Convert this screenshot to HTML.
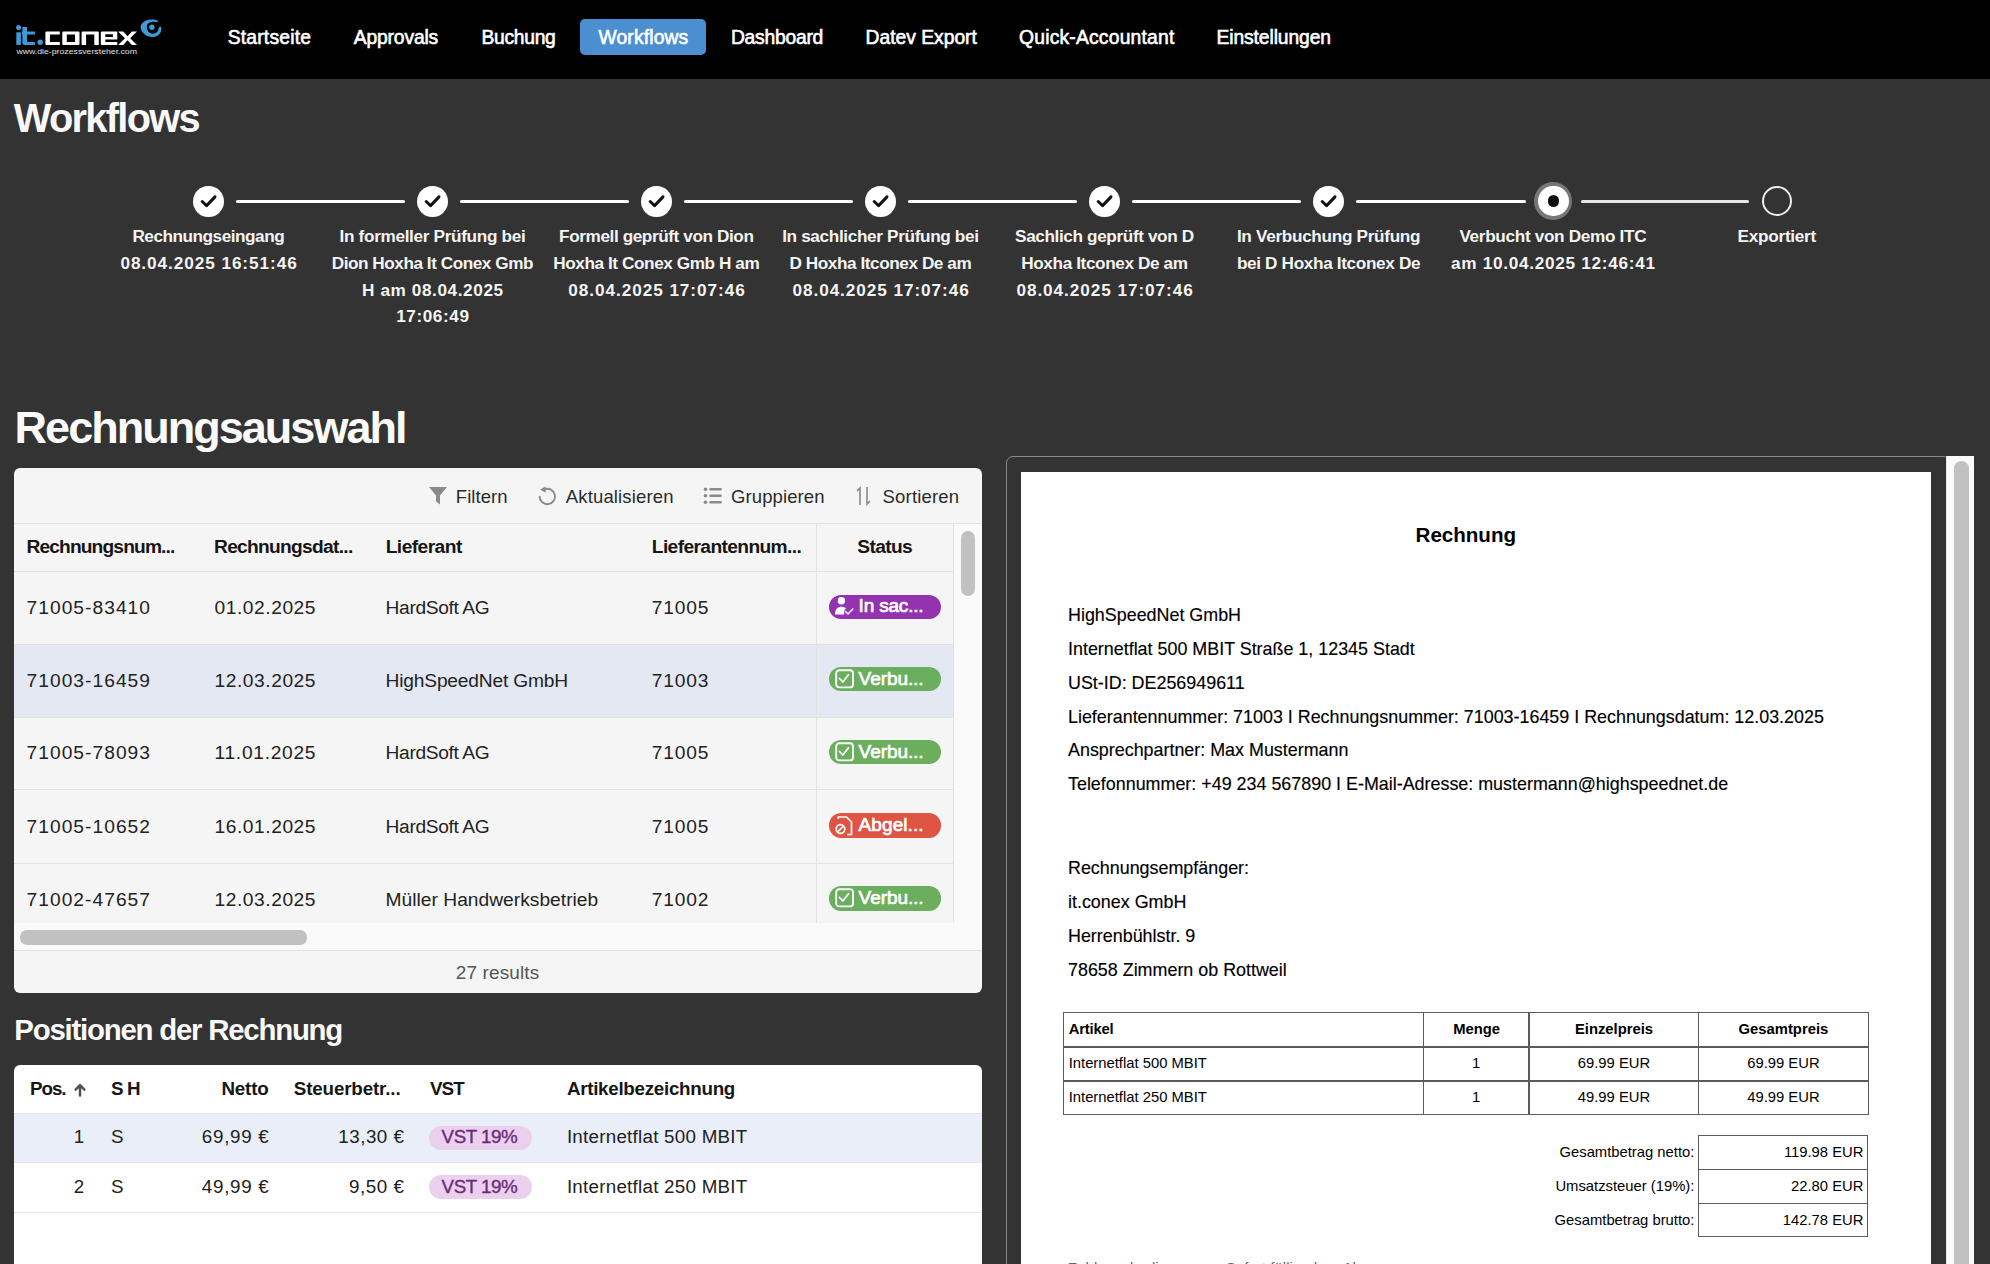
<!DOCTYPE html>
<html><head><meta charset="utf-8"><style>
html,body{margin:0;padding:0;width:1990px;height:1264px;overflow:hidden;background:#333;}
body{position:relative;font-family:"Liberation Sans",sans-serif;}
.t{position:absolute;white-space:pre;}
</style></head><body>
<div style="position:absolute;left:0;top:0;width:1990px;height:79px;background:#000"></div>
<div style="position:absolute;left:580px;top:19px;width:126px;height:36px;background:#4b8fd0;border-radius:5px"></div>
<svg width="170" height="60" style="position:absolute;left:0;top:0">
<g fill="#3f9ad8">
<circle cx="18.6" cy="27.4" r="2.5"/>
<rect x="16.3" y="32.3" width="4.6" height="12.6"/>
<path d="M22.4 27 H27 V31.6 H34.9 V34.6 H27 V41.9 H34.9 V44.9 H24.4 Q22.4 44.9 22.4 42.9 V34.6 H22 V31.6 H22.4 Z"/>
<circle cx="40.2" cy="42.3" r="2.7"/>
<path d="M157.8 20.6 C153 18.6 145 18.9 141.5 24 C139.3 27.5 141.5 32.8 146.5 35.6 C151.5 38.2 157.8 37.6 160.5 32.5 C161.5 30.5 161.5 28.5 160.8 26.6 C159.2 26.6 158.4 28.4 158.2 30 C157.4 33 153.2 34.6 150.1 33.1 C147.5 31.7 146.5 28.6 146.9 26 C147.5 22.6 151.4 21.4 154.5 21.7 C156 21.9 157.2 22.6 157.9 22.1 Z"/>
<circle cx="151.9" cy="27.3" r="2.7"/>
</g>
<g fill="#fff" fill-rule="evenodd">
<path d="M46.4 31.5 H59.8 V34.5 H49.9 V41.9 H59.8 V44.9 H46.4 Q45.4 44.9 45.4 43.9 V32.5 Q45.4 31.5 46.4 31.5 Z"/>
<path d="M63.3 31.5 H78.5 Q79.5 31.5 79.5 32.5 V43.9 Q79.5 44.9 78.5 44.9 H63.3 Q62.3 44.9 62.3 43.9 V32.5 Q62.3 31.5 63.3 31.5 Z M66.8 34.5 V41.9 H75 V34.5 Z"/>
<path d="M82.6 31.5 H97.8 Q98.8 31.5 98.8 32.5 V44.9 H94.3 V34.5 H86.1 V44.9 H81.6 V32.5 Q81.6 31.5 82.6 31.5 Z"/>
<path d="M101.8 31.5 H116.3 Q117.3 31.5 117.3 32.5 V39.6 H105.3 V41.9 H117.3 V44.9 H101.8 Q100.8 44.9 100.8 43.9 V32.5 Q100.8 31.5 101.8 31.5 Z M105.3 34.3 V37 H112.9 V34.3 Z"/>
<path d="M118.1 31.5 H123.3 L127.5 36.2 L131.8 31.5 H137 L130.2 38.2 L137 44.9 H131.8 L127.5 40.2 L123.3 44.9 H118.1 L124.9 38.2 Z"/>
</g>
<text x="16.4" y="54" fill="#e0e0e0" font-family="Liberation Sans" font-size="8" textLength="120.6" lengthAdjust="spacingAndGlyphs">www.die-prozessversteher.com</text>
</svg>
<div style="position:absolute;left:193.4px;top:185.79999999999998px;width:30.4px;height:30.8px;border-radius:50%;background:#fff"></div>
<svg style="position:absolute;left:198.6px;top:191.2px" width="20" height="20"><path d="M3.2 10.5 L7.6 14.6 L16 5.9" fill="none" stroke="#111" stroke-width="3" stroke-linecap="round" stroke-linejoin="round"/></svg>
<div style="position:absolute;left:236.1px;top:199.7px;width:168.9px;height:3px;background:#fff;border-radius:1.5px"></div>
<div style="position:absolute;left:417.3px;top:185.79999999999998px;width:30.4px;height:30.8px;border-radius:50%;background:#fff"></div>
<svg style="position:absolute;left:422.5px;top:191.2px" width="20" height="20"><path d="M3.2 10.5 L7.6 14.6 L16 5.9" fill="none" stroke="#111" stroke-width="3" stroke-linecap="round" stroke-linejoin="round"/></svg>
<div style="position:absolute;left:460.0px;top:199.7px;width:169.0px;height:3px;background:#fff;border-radius:1.5px"></div>
<div style="position:absolute;left:641.3px;top:185.79999999999998px;width:30.4px;height:30.8px;border-radius:50%;background:#fff"></div>
<svg style="position:absolute;left:646.5px;top:191.2px" width="20" height="20"><path d="M3.2 10.5 L7.6 14.6 L16 5.9" fill="none" stroke="#111" stroke-width="3" stroke-linecap="round" stroke-linejoin="round"/></svg>
<div style="position:absolute;left:684.0px;top:199.7px;width:169.0px;height:3px;background:#fff;border-radius:1.5px"></div>
<div style="position:absolute;left:865.3px;top:185.79999999999998px;width:30.4px;height:30.8px;border-radius:50%;background:#fff"></div>
<svg style="position:absolute;left:870.5px;top:191.2px" width="20" height="20"><path d="M3.2 10.5 L7.6 14.6 L16 5.9" fill="none" stroke="#111" stroke-width="3" stroke-linecap="round" stroke-linejoin="round"/></svg>
<div style="position:absolute;left:908.0px;top:199.7px;width:169.0px;height:3px;background:#fff;border-radius:1.5px"></div>
<div style="position:absolute;left:1089.3px;top:185.79999999999998px;width:30.4px;height:30.8px;border-radius:50%;background:#fff"></div>
<svg style="position:absolute;left:1094.5px;top:191.2px" width="20" height="20"><path d="M3.2 10.5 L7.6 14.6 L16 5.9" fill="none" stroke="#111" stroke-width="3" stroke-linecap="round" stroke-linejoin="round"/></svg>
<div style="position:absolute;left:1132.0px;top:199.7px;width:169.0px;height:3px;background:#fff;border-radius:1.5px"></div>
<div style="position:absolute;left:1313.3px;top:185.79999999999998px;width:30.4px;height:30.8px;border-radius:50%;background:#fff"></div>
<svg style="position:absolute;left:1318.5px;top:191.2px" width="20" height="20"><path d="M3.2 10.5 L7.6 14.6 L16 5.9" fill="none" stroke="#111" stroke-width="3" stroke-linecap="round" stroke-linejoin="round"/></svg>
<div style="position:absolute;left:1356.0px;top:199.7px;width:169.9000000000001px;height:3px;background:#fff;border-radius:1.5px"></div>
<div style="position:absolute;left:1534.4px;top:182.2px;width:38px;height:38px;border-radius:50%;background:#777"></div>
<div style="position:absolute;left:1538.1000000000001px;top:185.89999999999998px;width:30.6px;height:30.6px;border-radius:50%;background:#fff"></div>
<div style="position:absolute;left:1547.5px;top:195.29999999999998px;width:11.8px;height:11.8px;border-radius:50%;background:#0d0f12"></div>
<div style="position:absolute;left:1580.9px;top:199.7px;width:168.5999999999999px;height:3px;background:#e6e6e6;border-radius:1.5px"></div>
<div style="position:absolute;left:1761.7px;top:185.89999999999998px;width:30.6px;height:30.6px;border-radius:50%;box-sizing:border-box;border:2.5px solid #eee"></div>
<div style="position:absolute;left:13.5px;top:468px;width:968.5px;height:525px;background:#f5f5f5;border-radius:6px;overflow:hidden"></div>
<div style="position:absolute;left:13.5px;top:523px;width:968.5px;height:1px;background:#e2e2e2"></div>
<div style="position:absolute;left:13.5px;top:571px;width:940px;height:1px;background:#e0e0e0"></div>
<div style="position:absolute;left:13.5px;top:644.2px;width:940px;height:72.5px;background:#e3e8f3"></div>
<div style="position:absolute;left:13.5px;top:644.0px;width:940px;height:1px;background:#e2e2e2"></div>
<div style="position:absolute;left:13.5px;top:716.7px;width:940px;height:1px;background:#e2e2e2"></div>
<div style="position:absolute;left:13.5px;top:789.3px;width:940px;height:1px;background:#e2e2e2"></div>
<div style="position:absolute;left:13.5px;top:862.8px;width:940px;height:1px;background:#e2e2e2"></div>
<div style="position:absolute;left:816.3px;top:524px;width:1px;height:399px;background:#e2e2e2"></div>
<div style="position:absolute;left:953.3px;top:524px;width:1px;height:399px;background:#e2e2e2"></div>
<div style="position:absolute;left:954px;top:524px;width:28px;height:426px;background:#fafafa"></div>
<div style="position:absolute;left:13.5px;top:923px;width:968.5px;height:27px;background:#fafafa"></div>
<div style="position:absolute;left:13.5px;top:950px;width:968.5px;height:1px;background:#e0e0e0"></div>
<div style="position:absolute;left:960.5px;top:530.5px;width:14.3px;height:65.5px;background:#c1c1c1;border-radius:7px"></div>
<div style="position:absolute;left:20px;top:930px;width:286.5px;height:14.7px;background:#c1c1c1;border-radius:7px"></div>
<svg style="position:absolute;left:426px;top:484px" width="24" height="24"><path d="M3 3 H21 L14 11.5 V20.5 L10 17.5 V11.5 Z" fill="#8a8a8a"/></svg>
<svg style="position:absolute;left:535px;top:484px" width="24" height="24"><path d="M9.6 5.3 A7.7 7.7 0 1 1 4.6 12.6" fill="none" stroke="#8a8a8a" stroke-width="1.9" stroke-linecap="round"/><path d="M5.2 5.6 L10.6 2.6 L10.6 8.8 Z" fill="#8a8a8a"/></svg>
<svg style="position:absolute;left:701px;top:484px" width="24" height="24"><g fill="#8a8a8a"><circle cx="4.5" cy="5.3" r="1.8"/><circle cx="4.5" cy="11.8" r="1.8"/><circle cx="4.5" cy="18.3" r="1.8"/></g><g stroke="#8a8a8a" stroke-width="2.6" stroke-linecap="round"><path d="M9.6 5.3 H19.6"/><path d="M9.6 11.8 H19.6"/><path d="M9.6 18.3 H19.6"/></g></svg>
<svg style="position:absolute;left:854px;top:484px" width="20" height="24"><g fill="none" stroke="#8a8a8a" stroke-width="1.6"><path d="M6 21 V4 L3 7"/><path d="M13 3 V20 L16 17"/></g></svg>
<div style="position:absolute;left:828.6px;top:594.5px;width:112.3px;height:24.3px;border-radius:12.2px;background:#9333b0"></div>
<svg style="position:absolute;left:833px;top:593.5px" width="22" height="24"><circle cx="8.4" cy="6.8" r="3.7" fill="#fff"/><path d="M2 20.5 C2 15 5 12.8 8.5 12.8 C10.5 12.8 12 13.4 13 14.4 C11.5 15.5 10.8 17.5 11.2 20.5 Z" fill="#fff"/><path d="M12.5 17.5 L15 20 L19.8 15" fill="none" stroke="#fff" stroke-width="1.6" stroke-linecap="round" stroke-linejoin="round"/></svg>
<div style="position:absolute;left:828.6px;top:667.2px;width:112.3px;height:24.3px;border-radius:12.2px;background:#6aae5e"></div>
<svg style="position:absolute;left:833px;top:668.0px" width="22" height="22"><rect x="3.2" y="2.2" width="16.8" height="17.2" rx="3" fill="none" stroke="#fff" stroke-width="1.9"/><path d="M6.5 10.5 L9.8 14 L15.5 6.8" fill="none" stroke="#fff" stroke-width="1.8" stroke-linecap="round" stroke-linejoin="round"/></svg>
<div style="position:absolute;left:828.6px;top:739.8px;width:112.3px;height:24.3px;border-radius:12.2px;background:#6aae5e"></div>
<svg style="position:absolute;left:833px;top:740.5999999999999px" width="22" height="22"><rect x="3.2" y="2.2" width="16.8" height="17.2" rx="3" fill="none" stroke="#fff" stroke-width="1.9"/><path d="M6.5 10.5 L9.8 14 L15.5 6.8" fill="none" stroke="#fff" stroke-width="1.8" stroke-linecap="round" stroke-linejoin="round"/></svg>
<div style="position:absolute;left:828.6px;top:813.3px;width:112.3px;height:24.3px;border-radius:12.2px;background:#e05444"></div>
<svg style="position:absolute;left:833px;top:814.3px" width="24" height="24"><path d="M5.2 5 V3 H13.5 L18.5 8 V20.5 H14" fill="none" stroke="#fff" stroke-width="1.7" stroke-linejoin="round"/><circle cx="7.5" cy="15" r="4.3" fill="none" stroke="#fff" stroke-width="1.7"/><path d="M5 17.5 L10 12.5" stroke="#fff" stroke-width="1.7"/></svg>
<div style="position:absolute;left:828.6px;top:886.3px;width:112.3px;height:24.3px;border-radius:12.2px;background:#6aae5e"></div>
<svg style="position:absolute;left:833px;top:887.0999999999999px" width="22" height="22"><rect x="3.2" y="2.2" width="16.8" height="17.2" rx="3" fill="none" stroke="#fff" stroke-width="1.9"/><path d="M6.5 10.5 L9.8 14 L15.5 6.8" fill="none" stroke="#fff" stroke-width="1.8" stroke-linecap="round" stroke-linejoin="round"/></svg>
<div style="position:absolute;left:13.5px;top:1065.2px;width:968px;height:220px;background:#fff;border-radius:6px"></div>
<div style="position:absolute;left:13.5px;top:1113px;width:968px;height:49.5px;background:#e9eef8"></div>
<div style="position:absolute;left:13.5px;top:1112.5px;width:968px;height:1px;background:#e4e4e4"></div>
<div style="position:absolute;left:13.5px;top:1162px;width:968px;height:1px;background:#e8e8e8"></div>
<div style="position:absolute;left:13.5px;top:1211.5px;width:968px;height:1px;background:#e8e8e8"></div>
<svg style="position:absolute;left:73px;top:1082px" width="14" height="15"><path d="M7 13.6 V3.5 M2.6 7.6 L7 3.2 L11.4 7.6" fill="none" stroke="#505050" stroke-width="2.5" stroke-linecap="round" stroke-linejoin="round"/></svg>
<div style="position:absolute;left:429px;top:1125.8px;width:102.8px;height:24.3px;border-radius:12px;background:#ebd0ee"></div>
<div style="position:absolute;left:429px;top:1175px;width:102.8px;height:24.3px;border-radius:12px;background:#ebd0ee"></div>
<div style="position:absolute;left:1005.6px;top:456.1px;width:944.5px;height:900px;border:1px solid #8a8a8a;border-radius:7px;box-sizing:border-box"></div>
<div style="position:absolute;left:1020.9px;top:471.6px;width:909.8px;height:800px;background:#fff"></div>
<div style="position:absolute;left:1945.8px;top:455.8px;width:28px;height:820px;background:#fafafa;border-left:1px solid #e6e6e6;box-sizing:border-box"></div>
<div style="position:absolute;left:1954px;top:461.4px;width:15px;height:820px;background:#c1c1c1;border-radius:7.5px"></div>
<div style="position:absolute;left:1062.9px;top:1012px;width:806px;height:103px;border:1.5px solid #5c5c5c;box-sizing:border-box"></div>
<div style="position:absolute;left:1062.9px;top:1046.1px;width:806px;height:1.5px;background:#5c5c5c"></div>
<div style="position:absolute;left:1062.9px;top:1080px;width:806px;height:1.5px;background:#5c5c5c"></div>
<div style="position:absolute;left:1422.7px;top:1012px;width:1.5px;height:103px;background:#5c5c5c"></div>
<div style="position:absolute;left:1528.4px;top:1012px;width:1.5px;height:103px;background:#5c5c5c"></div>
<div style="position:absolute;left:1697.8px;top:1012px;width:1.5px;height:103px;background:#5c5c5c"></div>
<div style="position:absolute;left:1697.8px;top:1135px;width:170.6px;height:102px;border:1.5px solid #5c5c5c;box-sizing:border-box"></div>
<div style="position:absolute;left:1697.8px;top:1168.5px;width:170.6px;height:1.5px;background:#5c5c5c"></div>
<div style="position:absolute;left:1697.8px;top:1202.5px;width:170.6px;height:1.5px;background:#5c5c5c"></div>
<div class="t" style="left:227.70px;top:28.46px;font-size:19.3px;line-height:19.3px;color:#fff;letter-spacing:0.206px;-webkit-text-stroke:0.6px #fff;">Startseite</div>
<div class="t" style="left:353.80px;top:28.46px;font-size:19.3px;line-height:19.3px;color:#fff;letter-spacing:-0.167px;-webkit-text-stroke:0.6px #fff;">Approvals</div>
<div class="t" style="left:481.40px;top:28.46px;font-size:19.3px;line-height:19.3px;color:#fff;letter-spacing:-0.286px;-webkit-text-stroke:0.6px #fff;">Buchung</div>
<div class="t" style="left:598.50px;top:28.46px;font-size:19.3px;line-height:19.3px;color:#fff;letter-spacing:0.142px;-webkit-text-stroke:0.6px #fff;">Workflows</div>
<div class="t" style="left:730.90px;top:28.46px;font-size:19.3px;line-height:19.3px;color:#fff;letter-spacing:-0.241px;-webkit-text-stroke:0.6px #fff;">Dashboard</div>
<div class="t" style="left:865.50px;top:28.46px;font-size:19.3px;line-height:19.3px;color:#fff;letter-spacing:-0.005px;-webkit-text-stroke:0.6px #fff;">Datev Export</div>
<div class="t" style="left:1019.00px;top:28.46px;font-size:19.3px;line-height:19.3px;color:#fff;letter-spacing:0.208px;-webkit-text-stroke:0.6px #fff;">Quick-Accountant</div>
<div class="t" style="left:1216.50px;top:28.46px;font-size:19.3px;line-height:19.3px;color:#fff;letter-spacing:-0.106px;-webkit-text-stroke:0.6px #fff;">Einstellungen</div>
<div class="t" style="left:13.80px;top:98.60px;font-size:39.8px;line-height:39.8px;color:#f8f8f8;font-weight:700;letter-spacing:-1.698px;">Workflows</div>
<div class="t" style="left:132.40px;top:228.44px;font-size:17.2px;line-height:17.2px;color:#f4f4f4;font-weight:700;letter-spacing:-0.478px;">Rechnungseingang</div>
<div class="t" style="left:120.40px;top:255.44px;font-size:17.2px;line-height:17.2px;color:#f4f4f4;font-weight:700;letter-spacing:0.928px;">08.04.2025 16:51:46</div>
<div class="t" style="left:339.55px;top:228.44px;font-size:17.2px;line-height:17.2px;color:#f4f4f4;font-weight:700;letter-spacing:-0.337px;">In formeller Prüfung bei</div>
<div class="t" style="left:331.75px;top:255.44px;font-size:17.2px;line-height:17.2px;color:#f4f4f4;font-weight:700;letter-spacing:-0.468px;">Dion Hoxha It Conex Gmb</div>
<div class="t" style="left:362.10px;top:281.84px;font-size:17.2px;line-height:17.2px;color:#f4f4f4;font-weight:700;letter-spacing:0.584px;">H am 08.04.2025</div>
<div class="t" style="left:396.20px;top:308.24px;font-size:17.2px;line-height:17.2px;color:#f4f4f4;font-weight:700;letter-spacing:0.571px;">17:06:49</div>
<div class="t" style="left:559.10px;top:228.44px;font-size:17.2px;line-height:17.2px;color:#f4f4f4;font-weight:700;letter-spacing:-0.415px;">Formell geprüft von Dion</div>
<div class="t" style="left:553.30px;top:255.44px;font-size:17.2px;line-height:17.2px;color:#f4f4f4;font-weight:700;letter-spacing:-0.429px;">Hoxha It Conex Gmb H am</div>
<div class="t" style="left:568.25px;top:281.84px;font-size:17.2px;line-height:17.2px;color:#f4f4f4;font-weight:700;letter-spacing:0.939px;">08.04.2025 17:07:46</div>
<div class="t" style="left:782.20px;top:228.44px;font-size:17.2px;line-height:17.2px;color:#f4f4f4;font-weight:700;letter-spacing:-0.356px;">In sachlicher Prüfung bei</div>
<div class="t" style="left:789.50px;top:255.44px;font-size:17.2px;line-height:17.2px;color:#f4f4f4;font-weight:700;letter-spacing:-0.441px;">D Hoxha Itconex De am</div>
<div class="t" style="left:792.50px;top:281.84px;font-size:17.2px;line-height:17.2px;color:#f4f4f4;font-weight:700;letter-spacing:0.922px;">08.04.2025 17:07:46</div>
<div class="t" style="left:1015.05px;top:228.44px;font-size:17.2px;line-height:17.2px;color:#f4f4f4;font-weight:700;letter-spacing:-0.384px;">Sachlich geprüft von D</div>
<div class="t" style="left:1021.25px;top:255.44px;font-size:17.2px;line-height:17.2px;color:#f4f4f4;font-weight:700;letter-spacing:-0.397px;">Hoxha Itconex De am</div>
<div class="t" style="left:1016.45px;top:281.84px;font-size:17.2px;line-height:17.2px;color:#f4f4f4;font-weight:700;letter-spacing:0.928px;">08.04.2025 17:07:46</div>
<div class="t" style="left:1236.90px;top:228.44px;font-size:17.2px;line-height:17.2px;color:#f4f4f4;font-weight:700;letter-spacing:-0.321px;">In Verbuchung Prüfung</div>
<div class="t" style="left:1236.90px;top:255.44px;font-size:17.2px;line-height:17.2px;color:#f4f4f4;font-weight:700;letter-spacing:-0.353px;">bei D Hoxha Itconex De</div>
<div class="t" style="left:1459.45px;top:228.44px;font-size:17.2px;line-height:17.2px;color:#f4f4f4;font-weight:700;letter-spacing:-0.338px;">Verbucht von Demo ITC</div>
<div class="t" style="left:1451.00px;top:255.44px;font-size:17.2px;line-height:17.2px;color:#f4f4f4;font-weight:700;letter-spacing:0.704px;">am 10.04.2025 12:46:41</div>
<div class="t" style="left:1737.55px;top:228.44px;font-size:17.2px;line-height:17.2px;color:#f4f4f4;font-weight:700;letter-spacing:-0.275px;">Exportiert</div>
<div class="t" style="left:14.60px;top:404.69px;font-size:45px;line-height:45px;color:#fafafa;font-weight:700;letter-spacing:-1.979px;">Rechnungsauswahl</div>
<div class="t" style="left:455.80px;top:487.53px;font-size:18.5px;line-height:18.5px;color:#2a2a2a;letter-spacing:0.067px;">Filtern</div>
<div class="t" style="left:565.80px;top:487.53px;font-size:18.5px;line-height:18.5px;color:#2a2a2a;letter-spacing:0.149px;">Aktualisieren</div>
<div class="t" style="left:731.00px;top:487.53px;font-size:18.5px;line-height:18.5px;color:#2a2a2a;letter-spacing:0.105px;">Gruppieren</div>
<div class="t" style="left:882.60px;top:487.53px;font-size:18.5px;line-height:18.5px;color:#2a2a2a;letter-spacing:0.167px;">Sortieren</div>
<div class="t" style="left:26.40px;top:536.84px;font-size:19.2px;line-height:19.2px;color:#161616;font-weight:700;letter-spacing:-0.855px;">Rechnungsnum...</div>
<div class="t" style="left:214.00px;top:536.84px;font-size:19.2px;line-height:19.2px;color:#161616;font-weight:700;letter-spacing:-0.710px;">Rechnungsdat...</div>
<div class="t" style="left:385.70px;top:536.84px;font-size:19.2px;line-height:19.2px;color:#161616;font-weight:700;letter-spacing:-0.554px;">Lieferant</div>
<div class="t" style="left:651.80px;top:536.84px;font-size:19.2px;line-height:19.2px;color:#161616;font-weight:700;letter-spacing:-0.620px;">Lieferantennum...</div>
<div class="t" style="left:857.30px;top:536.84px;font-size:19.2px;line-height:19.2px;color:#161616;font-weight:700;letter-spacing:-0.648px;">Status</div>
<div class="t" style="left:26.50px;top:598.04px;font-size:19.2px;line-height:19.2px;color:#222;letter-spacing:1.040px;">71005-83410</div>
<div class="t" style="left:214.50px;top:598.04px;font-size:19.2px;line-height:19.2px;color:#222;letter-spacing:0.552px;">01.02.2025</div>
<div class="t" style="left:385.60px;top:598.04px;font-size:19.2px;line-height:19.2px;color:#222;letter-spacing:-0.357px;">HardSoft AG</div>
<div class="t" style="left:651.80px;top:598.04px;font-size:19.2px;line-height:19.2px;color:#222;letter-spacing:0.786px;">71005</div>
<div class="t" style="left:858.60px;top:596.41px;font-size:19px;line-height:19px;color:#fff;letter-spacing:-0.191px;-webkit-text-stroke:0.7px #fff;">In sac...</div>
<div class="t" style="left:26.50px;top:670.74px;font-size:19.2px;line-height:19.2px;color:#222;letter-spacing:1.040px;">71003-16459</div>
<div class="t" style="left:214.50px;top:670.74px;font-size:19.2px;line-height:19.2px;color:#222;letter-spacing:0.552px;">12.03.2025</div>
<div class="t" style="left:385.60px;top:670.74px;font-size:19.2px;line-height:19.2px;color:#222;letter-spacing:-0.192px;">HighSpeedNet GmbH</div>
<div class="t" style="left:651.80px;top:670.74px;font-size:19.2px;line-height:19.2px;color:#222;letter-spacing:0.786px;">71003</div>
<div class="t" style="left:858.60px;top:669.11px;font-size:19px;line-height:19px;color:#fff;letter-spacing:-0.070px;-webkit-text-stroke:0.7px #fff;">Verbu...</div>
<div class="t" style="left:26.50px;top:743.34px;font-size:19.2px;line-height:19.2px;color:#222;letter-spacing:1.040px;">71005-78093</div>
<div class="t" style="left:214.50px;top:743.34px;font-size:19.2px;line-height:19.2px;color:#222;letter-spacing:0.710px;">11.01.2025</div>
<div class="t" style="left:385.60px;top:743.34px;font-size:19.2px;line-height:19.2px;color:#222;letter-spacing:-0.357px;">HardSoft AG</div>
<div class="t" style="left:651.80px;top:743.34px;font-size:19.2px;line-height:19.2px;color:#222;letter-spacing:0.786px;">71005</div>
<div class="t" style="left:858.60px;top:741.71px;font-size:19px;line-height:19px;color:#fff;letter-spacing:-0.070px;-webkit-text-stroke:0.7px #fff;">Verbu...</div>
<div class="t" style="left:26.50px;top:816.84px;font-size:19.2px;line-height:19.2px;color:#222;letter-spacing:1.040px;">71005-10652</div>
<div class="t" style="left:214.50px;top:816.84px;font-size:19.2px;line-height:19.2px;color:#222;letter-spacing:0.552px;">16.01.2025</div>
<div class="t" style="left:385.60px;top:816.84px;font-size:19.2px;line-height:19.2px;color:#222;letter-spacing:-0.357px;">HardSoft AG</div>
<div class="t" style="left:651.80px;top:816.84px;font-size:19.2px;line-height:19.2px;color:#222;letter-spacing:0.786px;">71005</div>
<div class="t" style="left:858.60px;top:815.21px;font-size:19px;line-height:19px;color:#fff;letter-spacing:0.081px;-webkit-text-stroke:0.7px #fff;">Abgel...</div>
<div class="t" style="left:26.50px;top:889.84px;font-size:19.2px;line-height:19.2px;color:#222;letter-spacing:1.040px;">71002-47657</div>
<div class="t" style="left:214.50px;top:889.84px;font-size:19.2px;line-height:19.2px;color:#222;letter-spacing:0.552px;">12.03.2025</div>
<div class="t" style="left:385.60px;top:889.84px;font-size:19.2px;line-height:19.2px;color:#222;letter-spacing:0.018px;">Müller Handwerksbetrieb</div>
<div class="t" style="left:651.80px;top:889.84px;font-size:19.2px;line-height:19.2px;color:#222;letter-spacing:0.786px;">71002</div>
<div class="t" style="left:858.60px;top:888.21px;font-size:19px;line-height:19px;color:#fff;letter-spacing:-0.070px;-webkit-text-stroke:0.7px #fff;">Verbu...</div>
<div class="t" style="left:455.80px;top:963.01px;font-size:19px;line-height:19px;color:#555;letter-spacing:0.114px;">27 results</div>
<div class="t" style="left:14.30px;top:1014.90px;font-size:29.4px;line-height:29.4px;color:#fafafa;font-weight:700;letter-spacing:-1.226px;">Positionen der Rechnung</div>
<div class="t" style="left:30.10px;top:1079.98px;font-size:18.8px;line-height:18.8px;color:#161616;font-weight:700;letter-spacing:-1.088px;">Pos.</div>
<div class="t" style="left:110.90px;top:1079.98px;font-size:18.8px;line-height:18.8px;color:#161616;font-weight:700;">S</div>
<div class="t" style="left:127.10px;top:1079.98px;font-size:18.8px;line-height:18.8px;color:#161616;font-weight:700;">H</div>
<div class="t" style="left:221.40px;top:1079.98px;font-size:18.8px;line-height:18.8px;color:#161616;font-weight:700;letter-spacing:-0.147px;">Netto</div>
<div class="t" style="left:293.80px;top:1079.98px;font-size:18.8px;line-height:18.8px;color:#161616;font-weight:700;letter-spacing:-0.146px;">Steuerbetr...</div>
<div class="t" style="left:430.00px;top:1079.98px;font-size:18.8px;line-height:18.8px;color:#161616;font-weight:700;letter-spacing:-0.913px;">VST</div>
<div class="t" style="left:566.90px;top:1079.98px;font-size:18.8px;line-height:18.8px;color:#161616;font-weight:700;letter-spacing:-0.284px;">Artikelbezeichnung</div>
<div class="t" style="left:73.65px;top:1127.68px;font-size:18.8px;line-height:18.8px;color:#222;">1</div>
<div class="t" style="left:110.90px;top:1127.68px;font-size:18.8px;line-height:18.8px;color:#222;">S</div>
<div class="t" style="left:201.80px;top:1127.68px;font-size:18.8px;line-height:18.8px;color:#222;letter-spacing:0.723px;">69,99 €</div>
<div class="t" style="left:338.30px;top:1127.68px;font-size:18.8px;line-height:18.8px;color:#222;letter-spacing:0.490px;">13,30 €</div>
<div class="t" style="left:441.60px;top:1127.68px;font-size:18.8px;line-height:18.8px;color:#6a2a78;letter-spacing:-0.489px;-webkit-text-stroke:0.35px #6a2a78;">VST 19%</div>
<div class="t" style="left:566.90px;top:1127.68px;font-size:18.8px;line-height:18.8px;color:#222;letter-spacing:0.251px;">Internetflat 500 MBIT</div>
<div class="t" style="left:73.65px;top:1177.58px;font-size:18.8px;line-height:18.8px;color:#222;">2</div>
<div class="t" style="left:110.90px;top:1177.58px;font-size:18.8px;line-height:18.8px;color:#222;">S</div>
<div class="t" style="left:201.80px;top:1177.58px;font-size:18.8px;line-height:18.8px;color:#222;letter-spacing:0.723px;">49,99 €</div>
<div class="t" style="left:349.10px;top:1177.58px;font-size:18.8px;line-height:18.8px;color:#222;letter-spacing:0.517px;">9,50 €</div>
<div class="t" style="left:441.60px;top:1177.58px;font-size:18.8px;line-height:18.8px;color:#6a2a78;letter-spacing:-0.489px;-webkit-text-stroke:0.35px #6a2a78;">VST 19%</div>
<div class="t" style="left:566.90px;top:1177.58px;font-size:18.8px;line-height:18.8px;color:#222;letter-spacing:0.251px;">Internetflat 250 MBIT</div>
<div class="t" style="left:1415.60px;top:525.26px;font-size:20.6px;line-height:20.6px;color:#000;font-weight:700;letter-spacing:-0.039px;">Rechnung</div>
<div class="t" style="left:1068.00px;top:607.04px;font-size:17.9px;line-height:17.9px;color:#000;-webkit-text-stroke:0.15px #000;">HighSpeedNet GmbH</div>
<div class="t" style="left:1068.00px;top:640.89px;font-size:17.9px;line-height:17.9px;color:#000;-webkit-text-stroke:0.15px #000;">Internetflat 500 MBIT Straße 1, 12345 Stadt</div>
<div class="t" style="left:1068.00px;top:674.74px;font-size:17.9px;line-height:17.9px;color:#000;-webkit-text-stroke:0.15px #000;">USt-ID: DE256949611</div>
<div class="t" style="left:1068.00px;top:708.59px;font-size:17.9px;line-height:17.9px;color:#000;-webkit-text-stroke:0.15px #000;">Lieferantennummer: 71003 I Rechnungsnummer: 71003-16459 I Rechnungsdatum: 12.03.2025</div>
<div class="t" style="left:1068.00px;top:742.44px;font-size:17.9px;line-height:17.9px;color:#000;-webkit-text-stroke:0.15px #000;">Ansprechpartner: Max Mustermann</div>
<div class="t" style="left:1068.00px;top:776.29px;font-size:17.9px;line-height:17.9px;color:#000;-webkit-text-stroke:0.15px #000;">Telefonnummer: +49 234 567890 I E-Mail-Adresse: mustermann@highspeednet.de</div>
<div class="t" style="left:1068.00px;top:860.24px;font-size:17.9px;line-height:17.9px;color:#000;-webkit-text-stroke:0.15px #000;">Rechnungsempfänger:</div>
<div class="t" style="left:1068.00px;top:894.09px;font-size:17.9px;line-height:17.9px;color:#000;-webkit-text-stroke:0.15px #000;">it.conex GmbH</div>
<div class="t" style="left:1068.00px;top:927.94px;font-size:17.9px;line-height:17.9px;color:#000;-webkit-text-stroke:0.15px #000;">Herrenbühlstr. 9</div>
<div class="t" style="left:1068.00px;top:961.79px;font-size:17.9px;line-height:17.9px;color:#000;-webkit-text-stroke:0.15px #000;">78658 Zimmern ob Rottweil</div>
<div class="t" style="left:1068.70px;top:1021.97px;font-size:14.8px;line-height:14.8px;color:#000;font-weight:700;letter-spacing:-0.175px;">Artikel</div>
<div class="t" style="left:1453.17px;top:1021.97px;font-size:14.8px;line-height:14.8px;color:#000;font-weight:700;">Menge</div>
<div class="t" style="left:1574.94px;top:1021.97px;font-size:14.8px;line-height:14.8px;color:#000;font-weight:700;">Einzelpreis</div>
<div class="t" style="left:1738.58px;top:1021.97px;font-size:14.8px;line-height:14.8px;color:#000;font-weight:700;">Gesamtpreis</div>
<div class="t" style="left:1068.70px;top:1055.97px;font-size:14.8px;line-height:14.8px;color:#000;">Internetflat 500 MBIT</div>
<div class="t" style="left:1471.89px;top:1055.97px;font-size:14.8px;line-height:14.8px;color:#000;">1</div>
<div class="t" style="left:1577.81px;top:1055.97px;font-size:14.8px;line-height:14.8px;color:#000;">69.99 EUR</div>
<div class="t" style="left:1747.21px;top:1055.97px;font-size:14.8px;line-height:14.8px;color:#000;">69.99 EUR</div>
<div class="t" style="left:1068.70px;top:1089.77px;font-size:14.8px;line-height:14.8px;color:#000;">Internetflat 250 MBIT</div>
<div class="t" style="left:1471.89px;top:1089.77px;font-size:14.8px;line-height:14.8px;color:#000;">1</div>
<div class="t" style="left:1577.81px;top:1089.77px;font-size:14.8px;line-height:14.8px;color:#000;">49.99 EUR</div>
<div class="t" style="left:1747.21px;top:1089.77px;font-size:14.8px;line-height:14.8px;color:#000;">49.99 EUR</div>
<div class="t" style="left:1559.51px;top:1145.07px;font-size:14.8px;line-height:14.8px;color:#000;">Gesamtbetrag netto:</div>
<div class="t" style="left:1783.89px;top:1145.07px;font-size:14.8px;line-height:14.8px;color:#000;">119.98 EUR</div>
<div class="t" style="left:1555.43px;top:1178.77px;font-size:14.8px;line-height:14.8px;color:#000;">Umsatzsteuer (19%):</div>
<div class="t" style="left:1791.02px;top:1178.77px;font-size:14.8px;line-height:14.8px;color:#000;">22.80 EUR</div>
<div class="t" style="left:1554.58px;top:1212.57px;font-size:14.8px;line-height:14.8px;color:#000;">Gesamtbetrag brutto:</div>
<div class="t" style="left:1782.79px;top:1212.57px;font-size:14.8px;line-height:14.8px;color:#000;">142.78 EUR</div>
<div class="t" style="left:1068.00px;top:1260.11px;font-size:15.1px;line-height:15.1px;color:#666;">Zahlungsbedingungen: Sofort fällig ohne Abzug</div>
</body></html>
